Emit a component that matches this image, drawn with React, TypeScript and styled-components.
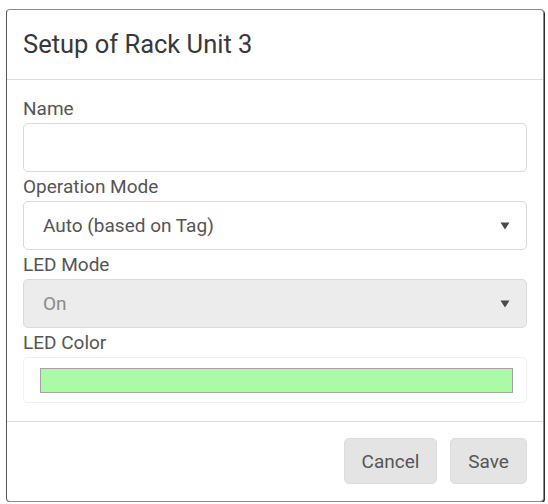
import React from 'react';
import styled, { createGlobalStyle } from 'styled-components';

const GlobalStyle = createGlobalStyle`
  html, body {
    margin: 0;
    padding: 0;
    background: #ffffff;
  }
  body {
    font-family: Roboto, "Liberation Sans", Arial, sans-serif;
  }
  * {
    box-sizing: border-box;
  }
`;

const fields = [
  { label: 'Name', kind: 'input' },
  { label: 'Operation Mode', kind: 'select', value: 'Auto (based on Tag)' },
  { label: 'LED Mode', kind: 'select', value: 'On', disabled: true },
  { label: 'LED Color', kind: 'color', value: '#abfba6' },
];

const Arrow = () => (
  <svg width="10" height="8" viewBox="0 0 10 8">
    <path d="M0.5 0.5 L9.5 0.5 L5 7.5 Z" fill="#4a4a4a" />
  </svg>
);

const App = () => {
  return (
    <>
      <GlobalStyle />
      <Page>
        <Dialog>
          <Header>
            <Title>Setup of Rack Unit 3</Title>
          </Header>
          <Body>
            {fields.map((f) => (
              <Field key={f.label}>
                <Label>{f.label}</Label>
                {f.kind === 'input' && <TextBox />}
                {f.kind === 'select' && (
                  <Select $disabled={f.disabled}>
                    <span>{f.value}</span>
                    <Arrow />
                  </Select>
                )}
                {f.kind === 'color' && (
                  <ColorBox>
                    <Swatch style={{ background: f.value }} />
                  </ColorBox>
                )}
              </Field>
            ))}
          </Body>
          <Footer>
            <Button $width={93}>Cancel</Button>
            <Button $width={77}>Save</Button>
          </Footer>
        </Dialog>
      </Page>
    </>
  );
};

const Page = styled.div`
  padding: 9px 0 0 6px;
`;

const Dialog = styled.div`
  width: 538px;
  display: flex;
  flex-direction: column;
  background: #fff;
  border: 1px solid #8c8c8c;
  border-left-color: #555;
  border-radius: 4px;
  box-shadow: 1px 1px 0 #2e2e2e;
`;

const Header = styled.div`
  padding: 19px 16px 20px;
  border-bottom: 1px solid #dedede;
`;

const Title = styled.div`
  font-size: 25.5px;
  line-height: 30px;
  color: #383838;
`;

const Body = styled.div`
  padding: 18px 16px 18px;
  display: flex;
  flex-direction: column;
  gap: 4px;
`;

const Field = styled.div`
  display: flex;
  flex-direction: column;
`;

const Label = styled.div`
  font-size: 19px;
  line-height: 22px;
  color: #555;
  margin-bottom: 3px;
`;

const TextBox = styled.div`
  height: 49px;
  border: 1px solid #dadada;
  border-radius: 5px;
  background: #fff;
`;

const Select = styled.div<{ $disabled?: boolean }>`
  height: 49px;
  display: flex;
  align-items: center;
  justify-content: space-between;
  padding: 0 16px 0 19px;
  border: 1px solid #dadada;
  border-radius: 5px;
  background: ${(p) => (p.$disabled ? '#ececec' : '#fff')};
  color: ${(p) => (p.$disabled ? '#8a8a8a' : '#555')};
  font-size: 19px;
`;

const ColorBox = styled.div`
  height: 46px;
  padding: 10px 13px 0 16px;
  border: 1px solid #f0f0f0;
  border-radius: 4px;
`;

const Swatch = styled.div`
  height: 25px;
  border: 1px solid #a3a3a3;
`;

const Footer = styled.div`
  display: flex;
  justify-content: flex-end;
  gap: 13px;
  padding: 16px 16px 17px;
  border-top: 1px solid #dedede;
`;

const Button = styled.div<{ $width: number }>`
  width: ${(p) => p.$width}px;
  height: 46px;
  display: flex;
  align-items: center;
  justify-content: center;
  background: #e4e4e4;
  border: 1px solid #dcdcdc;
  border-radius: 5px;
  color: #555;
  font-size: 19px;
`;

export default App;
